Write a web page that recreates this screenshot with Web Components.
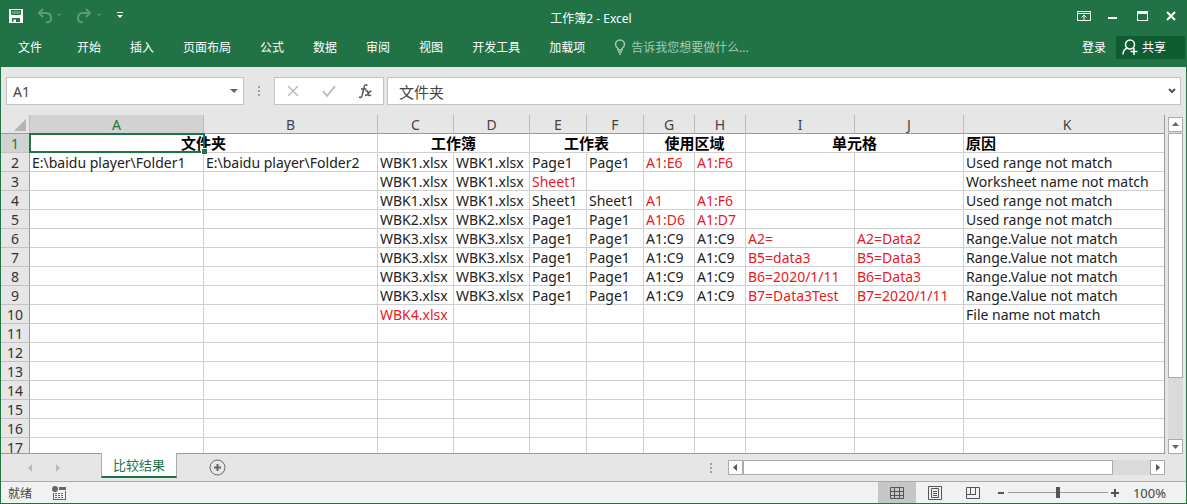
<!DOCTYPE html>
<html lang="zh-CN">
<head>
<meta charset="utf-8">
<title>工作簿2 - Excel</title>
<style>
html, body { margin: 0; height: 100%; }
body { font-family: "Noto Sans", "Noto Sans CJK SC", sans-serif; font-size: 12px; color: #444; --green: #217346; overflow: hidden; }
</style>
</head>
<body>
<xl-window>
  <xl-titlebar>工作簿2 - Excel</xl-titlebar>
  <xl-ribbon></xl-ribbon>
  <xl-formula-bar cell="A1" value="文件夹"></xl-formula-bar>
  <xl-sheet></xl-sheet>
  <xl-tabs>比较结果</xl-tabs>
  <xl-status>就绪</xl-status>
</xl-window>
<script>
const define = (name, html, setup) => {
  const tpl = document.createElement('template');
  tpl.innerHTML = `<style>
    *, :host { box-sizing: border-box; }
    button { font: inherit; color: inherit; background: none; border: 0; padding: 0; margin: 0; display: flex; align-items: center; justify-content: center; flex: none; }
    svg { display: block; flex: none; }
  </style>` + html;
  customElements.define(name, class extends HTMLElement {
    constructor() {
      super();
      this.attachShadow({ mode: 'open' }).append(tpl.content.cloneNode(true));
    }
    connectedCallback() { if (setup) setup(this, this.shadowRoot); }
  });
};

define('xl-window', `<style>
  :host { display: flex; flex-direction: column; height: 100vh; border: 1px solid var(--green); border-top: 0; background: #e6e6e6; }
</style><slot></slot>`);

define('xl-titlebar', `<style>
  :host { display: grid; grid-template-columns: 1fr auto 1fr; align-items: center; height: 32px; flex: none; background: var(--green); color: #fff; padding: 0 8px 0 7px; }
  .quick, .win { display: flex; align-items: center; }
  .quick { gap: 11px; }
  .win { justify-content: flex-end; gap: 14px; }
  .title { padding: 4px 4px 0 0; font-size: 12px; }
  .dim { opacity: .28; }
</style>
<div class="quick">
  <button aria-label="保存"><svg width="16" height="16" viewBox="0 0 16 16"><path fill="#fff" fill-rule="evenodd" d="M1 1h14v14H1zM3 2v4l1 1h8l1-1V2zM4 10v4h1.500v-2.500H8V14h4v-4z"/><path fill="#fff" opacity=".3" d="M4 3h8v3H4z"/></svg></button>
  <button class="dim" aria-label="撤消"><svg width="28" height="16" viewBox="0 0 28 16"><path d="M8 1 4 5l4 4M4 5h7q5 0 5 5t-5 4" fill="none" stroke="#fff" stroke-width="2"/><path d="M22 6h4l-2 2z" fill="#fff"/></svg></button>
  <button class="dim" aria-label="恢复"><svg width="28" height="16" viewBox="0 0 28 16"><path d="M12 1l4 4-4 4M16 5H9q-5 0-5 5t5 4" fill="none" stroke="#fff" stroke-width="2"/><path d="M23 6h4l-2 2z" fill="#fff"/></svg></button>
  <button aria-label="自定义快速访问工具栏"><svg width="14" height="16" viewBox="1 0 14 16"><path fill="#fff" d="M5 4h6v1H5zM5 7h6L8 10z"/></svg></button>
</div>
<div class="title"><slot></slot></div>
<div class="win">
  <button aria-label="功能区显示选项"><svg width="16" height="16" viewBox="0 0 16 16" fill="none" stroke="#fff"><path d="M1.500 3.500h13v9h-13zM1 5.500h14M8 12V7M5.500 9.500 8 7l2.500 2.500"/></svg></button>
  <button aria-label="最小化"><svg width="14" height="16" viewBox="0 0 14 16"><path fill="#fff" d="M2 9h9v2H2z"/></svg></button>
  <button aria-label="最大化"><svg width="16" height="16" viewBox="0 0 16 16"><path fill="#fff" fill-rule="evenodd" d="M3 3h11v10H3zM4 6h9v6H4z"/></svg></button>
  <button aria-label="关闭"><svg width="14" height="16" viewBox="0 0 14 16"><path d="m3 4 8 8m0-8-8 8" stroke="#fff" stroke-width="2"/></svg></button>
</div>`);

define('xl-ribbon', `<style>
  :host { display: flex; align-items: center; justify-content: space-between; flex: none; height: 35px; padding: 0 1px 5px 17px; background: var(--green); color: #fff; }
  nav, .right, .tell { display: flex; align-items: center; }
  nav { gap: 29px; }
  nav button:first-of-type { margin-right: 6px; }
  .tell { gap: 5px; color: #a3cbb3; }
  .right { gap: 10px; }
  .share { background: #0e5c2f; height: 23px; width: 69px; gap: 4px; justify-content: flex-start; padding-left: 6px; }
</style>
<nav>
  <button>文件</button><button>开始</button><button>插入</button><button>页面布局</button><button>公式</button><button>数据</button><button>审阅</button><button>视图</button><button>开发工具</button><button>加载项</button>
  <button class="tell"><svg width="12" height="16" viewBox="0 0 12 16" fill="none" stroke="currentColor"><path stroke-width="1.500" d="M4 11V9.500C2 8 1.500 7 1.500 5.500a4.500 4.500 0 0 1 9 0C10.500 7 10 8 8 9.500V11zM4 13h4M5 15h2"/></svg>告诉我您想要做什么...</button>
</nav>
<div class="right"><button>登录</button><button class="share"><svg width="16" height="16" viewBox="0 0 16 16" fill="none" stroke="#fff" stroke-width="1.500"><circle cx="8" cy="5.500" r="4.500"/><path d="M1 15.500q0-5 4.500-6.500M12 9v7M8.500 12.500h7"/></svg>共享</button></div>`);

define('xl-formula-bar', `<style>
  :host { display: flex; align-items: center; flex: none; height: 48px; padding: 0 5px 0 5px; font-size: 14px; }
  .box { display: flex; align-items: center; height: 28px; background: #fff; border: 1px solid #c3c3c3; }
  input { font: inherit; color: #444; border: 0; outline: 0; background: none; min-width: 0; flex: 1; padding: 0 6px; height: 24px; }
  .name { width: 238px; padding-right: 4px; }
  .tools { width: 110px; justify-content: space-between; padding: 0 9px 0 10px; margin-right: 3px; }
  .fx { flex: 1; padding-right: 3px; }
  .fx input { padding-left: 11px; font-size: 15px; font-family: "Noto Sans CJK SC", sans-serif; }
  .grip { margin: 0 12px; }
</style>
<div class="box name"><input aria-label="名称框"><button aria-label="名称列表"><svg width="10" height="10" viewBox="0 0 10 10"><path d="M1 3h8L5 7z" fill="#666"/></svg></button></div>
<svg class="grip" width="6" height="14" viewBox="0 0 6 14" fill="#a0a0a0"><path d="M2 2h2v2H2zM2 6h2v2H2zM2 10h2v2H2z"/></svg>
<div class="box tools">
  <button aria-label="取消"><svg width="16" height="16" viewBox="0 0 16 16"><path d="m3 3 10 10m0-10L3 13" stroke="#bbb" stroke-width="1.500"/></svg></button>
  <button aria-label="输入"><svg width="16" height="16" viewBox="0 0 16 16"><path d="m2 8 4 5 8-10" fill="none" stroke="#bbb" stroke-width="2"/></svg></button>
  <button aria-label="插入函数"><svg width="18" height="18" viewBox="0 0 18 18" fill="none" stroke="#555" stroke-width="1.500"><path d="M11.500 3.500C9.500 2 8.500 3 8 5.500L6.500 12C6 15 5 16 3 15M5 7h5.500M9.500 9q2-1 2.500 1.500l.5 2q.5 2 2.500.5M15.500 9q-2 0-3 2.200T9 13.500"/></svg></button>
</div>
<div class="box fx"><input aria-label="编辑栏" class="value"><button aria-label="展开编辑栏"><svg width="10" height="10" viewBox="0 0 10 10"><path d="m2 3 3 3 3-3" fill="none" stroke="#555" stroke-width="2"/></svg></button></div>`,
(el, root) => {
  root.querySelector('.name input').value = el.getAttribute('cell');
  root.querySelector('.value').value = el.getAttribute('value');
});

define('xl-sheet', `<style>
  :host { display: flex; flex: 1; min-height: 0; gap: 3px; padding-right: 3px; }
  .grid { flex: 1; min-width: 0; overflow: hidden; border-right: 1px solid #9b9b9b; border-bottom: 1px solid #9b9b9b; background: linear-gradient(#e6e6e6 19px, #fff 19px); }
  table { width: 100%; table-layout: fixed; border-spacing: 0; font-size: 14px; line-height: 16px; color: #222; }
  th, td { padding: 2px 0 0; height: 19px; white-space: nowrap; font-weight: 400; }
  td { border-right: 1px solid #d0d0d0; border-bottom: 1px solid #d0d0d0; background: #fff; padding-left: 2px; text-align: left; }
  td:last-child { border-right: 0; }
  thead th { border-bottom: 1px solid #9b9b9b; border-right: 1px solid #bcbcbc; color: #444; background: #e6e6e6; }
  thead th:last-child { border-right: 0; padding-left: 6px; }
  tbody th { border-right: 1px solid #9b9b9b; border-bottom: 1px solid #c3c3c3; background: #e6e6e6; color: #333; text-align: center; }
  thead th.on, tbody th.on { background: #d2d2d2; color: var(--green); }
  .corner svg { margin-left: auto; margin-right: 3px; }
  td.title { text-align: center; font: 700 15px/18px "Noto Sans CJK SC", sans-serif; padding: 0; color: #000; }
  td.left { text-align: left; padding-left: 2px; }
  td.anchor { position: relative; }
  .select { position: absolute; z-index: 1; left: -1px; top: -1px; bottom: -1px; width: calc(50% + 2px); border: 2px solid var(--green); }
  .select::after { content: ""; position: absolute; right: -4px; bottom: -3px; width: 6px; height: 6px; background: var(--green); border: 1px solid #fff; border-width: 1px 0 0 1px; box-sizing: border-box; }
  .red { color: #e8191f; }
  .scroll { display: flex; flex-direction: column; width: 15px; flex: none; padding-top: 2px; }
  .scroll button { width: 15px; height: 15px; background: #fff; border: 1px solid #ababab; }
  .track { flex: 1; background: #dadada; padding-top: 1px; min-height: 0; }
  .thumb { height: 80%; background: #fff; border: 1px solid #ababab; }
</style>
<div class="grid"><table>
  <colgroup></colgroup><thead><tr></tr></thead><tbody></tbody>
</table></div>
<div class="scroll">
  <button aria-label="向上滚动"><svg width="9" height="9" viewBox="0 0 9 9"><path d="M1 6h7L4.500 2z" fill="#666"/></svg></button>
  <div class="track"><div class="thumb"></div></div>
  <button aria-label="向下滚动"><svg width="9" height="9" viewBox="0 0 9 9"><path d="M1 3h7L4.500 7z" fill="#666"/></svg></button>
</div>`,
(el, root) => {
  const widths = [29, 174, 174, 76, 76, 57, 57, 51, 51, 109, 109, 0];
  root.querySelector('colgroup').innerHTML = widths.map(w => w ? `<col style="width:${w}px">` : '<col>').join('');
  root.querySelector('thead tr').innerHTML =
    '<th class="corner" aria-label="全选"><svg width="12" height="12" viewBox="0 0 12 12"><path d="M12 0v12H0z" fill="#b4b4b4"/></svg></th>' +
    [...'ABCDEFGHIJK'].map((c, i) => `<th scope="col"${i ? '' : ' class="on"'}>${c}</th>`).join('');
  // A leading "!" marks a mismatching value, shown in red.
  const rows = [
    ['E:\\baidu player\\Folder1', 'E:\\baidu player\\Folder2', 'WBK1.xlsx', 'WBK1.xlsx', 'Page1', 'Page1', '!A1:E6', '!A1:F6', '', '', 'Used range not match'],
    ['', '', 'WBK1.xlsx', 'WBK1.xlsx', '!Sheet1', '', '', '', '', '', 'Worksheet name not match'],
    ['', '', 'WBK1.xlsx', 'WBK1.xlsx', 'Sheet1', 'Sheet1', '!A1', '!A1:F6', '', '', 'Used range not match'],
    ['', '', 'WBK2.xlsx', 'WBK2.xlsx', 'Page1', 'Page1', '!A1:D6', '!A1:D7', '', '', 'Used range not match'],
    ['', '', 'WBK3.xlsx', 'WBK3.xlsx', 'Page1', 'Page1', 'A1:C9', 'A1:C9', '!A2=', '!A2=Data2', 'Range.Value not match'],
    ['', '', 'WBK3.xlsx', 'WBK3.xlsx', 'Page1', 'Page1', 'A1:C9', 'A1:C9', '!B5=data3', '!B5=Data3', 'Range.Value not match'],
    ['', '', 'WBK3.xlsx', 'WBK3.xlsx', 'Page1', 'Page1', 'A1:C9', 'A1:C9', '!B6=2020/1/11', '!B6=Data3', 'Range.Value not match'],
    ['', '', 'WBK3.xlsx', 'WBK3.xlsx', 'Page1', 'Page1', 'A1:C9', 'A1:C9', '!B7=Data3Test', '!B7=2020/1/11', 'Range.Value not match'],
    ['', '', '!WBK4.xlsx', '', '', '', '', '', '', '', 'File name not match']
  ];
  while (rows.length < 16) rows.push(Array(11).fill(''));
  const first = '<tr><th scope="row" class="on">1</th><td class="title anchor" colspan="2">文件夹<div class="select"></div></td>' +
    ['工作簿', '工作表', '使用区域', '单元格'].map(t => `<td class="title" colspan="2">${t}</td>`).join('') +
    '<td class="title left">原因</td></tr>';
  root.querySelector('tbody').innerHTML = first + rows.map((r, i) =>
    `<tr><th scope="row">${i + 2}</th>` + r.map(v => v[0] === '!' ? `<td class="red">${v.slice(1)}</td>` : `<td>${v}</td>`).join('') + '</tr>').join('');
});

define('xl-tabs', `<style>
  :host { display: flex; flex: none; height: 27px; padding: 0 21px 0 22px; }
  .nav { display: flex; gap: 14px; width: 78px; align-items: center; }
  .tab { height: 25px; width: 76px; margin-top: -1px; background: #fff; color: var(--green); border: 1px solid #ababab; border-top: 0; border-bottom: 2px solid var(--green); font-size: 13px; }
  .add { margin-left: 32px; }
  .bar { display: flex; align-items: center; margin-left: auto; width: 40%; }
  .bar button { width: 15px; height: 15px; border: 1px solid #ababab; background: #fff; }
  .track { flex: 1; height: 15px; background: #dadada; }
  .thumb { width: 91%; height: 15px; background: #fff; border: 1px solid #ababab; }
  .grip { margin-right: 14px; }
</style>
<div class="nav"><button aria-label="上一张"><svg width="14" height="10" viewBox="0 0 14 10"><path d="M9 1v8L5 5z" fill="#bbb"/></svg></button><button aria-label="下一张"><svg width="14" height="10" viewBox="0 0 14 10"><path d="M5 1v8l4-4z" fill="#bbb"/></svg></button></div>
<button class="tab"><slot></slot></button>
<button class="add" aria-label="新工作表"><svg width="17" height="17" viewBox="0 0 17 17" fill="none" stroke="#666"><circle cx="8.500" cy="8.500" r="7.500"/><path stroke-width="2" d="M8.500 5v7M5 8.500h7"/></svg></button>
<div class="bar"><svg class="grip" width="6" height="14" viewBox="0 0 6 14" fill="#a0a0a0"><path d="M2 2h2v2H2zM2 6h2v2H2zM2 10h2v2H2z"/></svg>
<button aria-label="向左滚动"><svg width="9" height="9" viewBox="0 0 9 9"><path d="M6 1v7L2 4.500z" fill="#555"/></svg></button>
<div class="track"><div class="thumb"></div></div>
<button aria-label="向右滚动"><svg width="9" height="9" viewBox="0 0 9 9"><path d="M3 1v7l4-3.500z" fill="#555"/></svg></button></div>`);

define('xl-status', `<style>
  :host { display: flex; align-items: center; justify-content: space-between; flex: none; height: 22px; border-top: 1px solid #ababab; background: #f1f1f1; padding: 0 20px 0 7px; }
  .left, .right, .zoom { display: flex; align-items: center; }
  .left { gap: 20px; }
  .view { width: 38px; height: 21px; }
  .view.on { background: #c6c6c6; }
  .zoom { gap: 2px; margin: 0 13px 0 4px; }
  .percent { font-size: 13px; line-height: 16px; }
  input { appearance: none; width: 100px; height: 16px; margin: 0; background: linear-gradient(#9a9a9a, #9a9a9a) center / 100% 1px no-repeat; }
  input::-webkit-slider-thumb { appearance: none; width: 4px; height: 11px; background: #555; }
</style>
<div class="left"><span><slot></slot></span><button aria-label="录制宏"><svg width="14" height="14" viewBox="0 0 14 14"><circle cx="3" cy="3" r="3" fill="#666"/><path fill="#666" fill-rule="evenodd" d="M7 1h7v3H7zM1 7h1v6h11V5h1v9H1zM3 7h2v1H3zM6 7h2v1H6zM9 7h2v1H9zM3 9h2v1H3zM6 9h2v1H6zM9 9h2v1H9zM3 11h2v1H3zM6 11h2v1H6zM9 11h2v1H9z"/></svg></button></div>
<div class="right">
  <button class="view on" aria-label="普通"><svg width="14" height="14" viewBox="0 0 14 14" fill="none" stroke="#555"><path d="M.5 1.500h13v11H.5zM4.500 1v12M9.500 1v12M0 5.500h14M0 9.500h14"/></svg></button>
  <button class="view" aria-label="页面布局"><svg width="14" height="14" viewBox="0 0 14 14" fill="none" stroke="#555"><path d="M.5.500h13v13H.5zM3.500 2.500h7v9h-7zM5 5.500h4M5 7.500h4M5 9.500h4"/></svg></button>
  <button class="view" aria-label="分页预览"><svg width="14" height="14" viewBox="0 0 14 14" fill="none" stroke="#555"><path d="M.5 1.500h13v11H.5zM4.500 1v7M9.500 1v7M0 8.500h10"/></svg></button>
  <div class="zoom"><button aria-label="缩小"><svg width="10" height="10" viewBox="0 0 10 10"><path d="M2 4h6v2H2z" fill="#555"/></svg></button><input type="range" aria-label="显示比例" min="0" max="100" value="50"><button aria-label="放大"><svg width="10" height="10" viewBox="0 0 10 10"><path d="M1 4h3V1h2v3h3v2H6v3H4V6H1z" fill="#555"/></svg></button></div>
  <span class="percent">100%</span>
</div>`);
</script>
</body>
</html>
